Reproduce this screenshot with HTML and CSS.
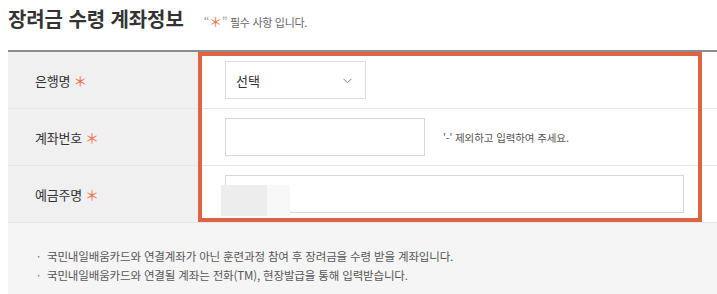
FILE: index.html
```html
<!DOCTYPE html>
<html lang="ko">
<head>
<meta charset="utf-8">
<link rel="stylesheet" href="styles.css">
</head>
<body>
<div class="page">
  <div class="head">
    <h2 class="title">장려금 수령 계좌정보</h2>
    <p class="req"><span class="q">“</span><span class="star">＊</span><span class="q">”</span> 필수 사항 입니다.</p>
  </div>
  <div class="form">
    <div class="row">
      <div class="label">은행명 <span class="star">＊</span></div>
      <div class="value">
        <div class="select">
          <span>선택</span>
          <svg class="chev" width="9" height="6" viewBox="0 0 9 6"><path d="M0.5 0.8 L4.5 4.8 L8.5 0.8" fill="none" stroke="#777" stroke-width="1"/></svg>
        </div>
      </div>
    </div>
    <div class="row">
      <div class="label">계좌번호 <span class="star">＊</span></div>
      <div class="value">
        <div class="input w200"></div>
        <span class="hint">'-' 제외하고 입력하여 주세요.</span>
      </div>
    </div>
    <div class="row">
      <div class="label">예금주명 <span class="star">＊</span></div>
      <div class="value">
        <div class="input wfull"></div>
        <div class="mask"><span class="m1"></span><span class="m2"></span></div>
      </div>
    </div>
    <div class="highlight"></div>
  </div>
  <ul class="notes">
    <li>국민내일배움카드와 연결계좌가 아닌 훈련과정 참여 후 장려금을 수령 받을 계좌입니다.</li>
    <li>국민내일배움카드와 연결될 계좌는 전화(TM), 현장발급을 통해 입력받습니다.</li>
  </ul>
</div>
</body>
</html>
```
FILE: styles.css
```css
* { box-sizing: border-box; }
html, body { margin: 0; padding: 0; background: #fff; }
body {
  font-family: "Noto Sans CJK KR", "Noto Sans", sans-serif;
  color: #333;
  width: 717px;
  overflow: hidden;
}
.page { padding-left: 8px; }
.head {
  height: 50px;
  display: flex;
  align-items: baseline;
  padding-top: 6px;
}
.title {
  margin: 0;
  font-size: 20px;
  line-height: 26px;
  font-weight: 700;
  color: #333;
  letter-spacing: -0.1px;
}
.req {
  margin: 0 0 0 20px;
  font-size: 11px;
  color: #666;
  letter-spacing: -0.3px;
}
.req .q { color: #999; font-size: 12px; }
.req .star { font-size: 13px; }
.star { color: #ef6f45; font-weight: 400; }
.form {
  position: relative;
  border-top: 2px solid #8c8c8c;
}
.row {
  display: flex;
  height: 57px;
  border-bottom: 1px solid #e6e6e6;
}
.label {
  width: 192px;
  flex: none;
  background: #f0f0f1;
  padding-left: 27px;
  display: flex;
  align-items: center;
  font-size: 13px;
  color: #333;
  letter-spacing: -0.2px;
  gap: 3px;
}
.label .star { font-size: 14px; line-height: 1; }
.value {
  flex: 1;
  position: relative;
  display: flex;
  align-items: center;
  padding-left: 25px;
}
.select {
  width: 141px;
  height: 38px;
  border: 1px solid #dcdcdc;
  display: flex;
  align-items: center;
  justify-content: space-between;
  padding: 0 13px 0 10px;
  font-size: 13px;
  color: #333;
}
.chev { margin-top: 1px; }
.input {
  height: 38px;
  border: 1px solid #d6d6d6;
  background: #fff;
}
.w200 { width: 200px; }
.wfull { width: 459px; }
.hint {
  margin-left: 18px;
  font-size: 10.5px;
  color: #555;
  letter-spacing: -0.1px;
}
.mask {
  position: absolute;
  left: 21px;
  top: 19px;
  height: 31px;
  display: flex;
}
.mask .m1 { width: 46px; background: #ededed; }
.mask .m2 { width: 23px; background: #f8f8f8; }
.highlight {
  position: absolute;
  left: 190px;
  top: 0;
  width: 504px;
  height: 170px;
  border: 4px solid #dd6342;
  pointer-events: none;
}
.notes {
  list-style: none;
  margin: 0;
  background: #f5f5f5;
  padding: 24px 0 20px 29px;
  height: 80px;
  font-size: 11.5px;
  line-height: 19px;
  color: #555;
  letter-spacing: -0.15px;
}
.notes li::before {
  content: "·";
  display: inline-block;
  width: 10px;
  color: #777;
}
```
